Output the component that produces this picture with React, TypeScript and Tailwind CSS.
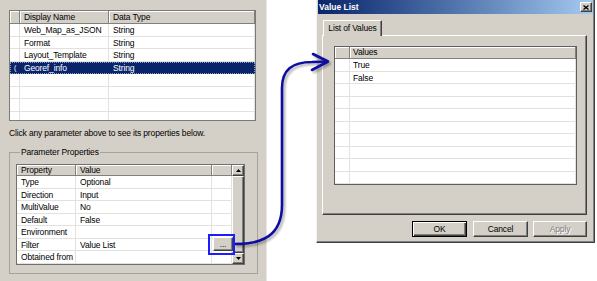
import React from 'react';

const raised =
  'bg-[#d4d0c8] border border-t-white border-l-white border-r-[#404040] border-b-[#404040] shadow-[inset_-1px_-1px_0_#808080]';
const headCell =
  'h-full bg-[#d4d0c8] border-r border-b border-[#808080] shadow-[inset_1px_1px_0_#fff] whitespace-nowrap overflow-hidden';
const line = 'border-r border-b border-[#e2e1de] whitespace-nowrap overflow-hidden';

function TopTable() {
  const rows = [
    ['Web_Map_as_JSON', 'String'],
    ['Format', 'String'],
    ['Layout_Template', 'String'],
    ['Georef_info', 'String'],
    ['', ''],
    ['', ''],
    ['', ''],
    ['', ''],
  ];
  return (
    <div className="w-[247px] h-[111px] shrink-0 border border-[#7a7a7a] bg-white overflow-hidden">
      <div className="flex h-[13px] leading-[12px]">
        <div className={`w-[10px] shrink-0 ${headCell}`} />
        <div className={`w-[89px] shrink-0 pl-[4px] ${headCell}`}>Display Name</div>
        <div className={`flex-1 pl-[4px] ${headCell}`}>Data Type</div>
      </div>
      {rows.map(([name, type], i) =>
        i === 3 ? (
          <div
            key={i}
            className="flex h-[12.5px] leading-[12px] bg-[#0a246a] text-white outline-1 outline-dotted -outline-offset-1 outline-[#8f98bd]"
          >
            <div className="w-[10px] shrink-0 pl-[4px] text-[7px]">(</div>
            <div className="w-[89px] shrink-0 pl-[4px]">{name}</div>
            <div className="flex-1 pl-[4px]">{type}</div>
          </div>
        ) : (
          <div key={i} className="flex h-[12.5px] leading-[12px]">
            <div className={`w-[10px] shrink-0 ${line}`} />
            <div className={`w-[89px] shrink-0 pl-[4px] ${line}`}>{name}</div>
            <div className={`flex-1 pl-[4px] ${line}`}>{type}</div>
          </div>
        )
      )}
    </div>
  );
}

function ScrollBar() {
  return (
    <div className="w-[12px] shrink-0 flex flex-col bg-[#ece9e4]">
      <div className={`h-[11px] shrink-0 flex items-center justify-center ${raised}`}>
        <svg width="5" height="3" viewBox="0 0 5 3">
          <path d="M2.5 0L5 3H0z" fill="#000" />
        </svg>
      </div>
      <div className={`flex-1 ${raised}`} />
      <div className={`h-[11px] shrink-0 flex items-center justify-center ${raised}`}>
        <svg width="5" height="3" viewBox="0 0 5 3">
          <path d="M0 0H5L2.5 3z" fill="#000" />
        </svg>
      </div>
    </div>
  );
}

function PropTable() {
  const rows = [
    ['Type', 'Optional'],
    ['Direction', 'Input'],
    ['MultiValue', 'No'],
    ['Default', 'False'],
    ['Environment', ''],
    ['Filter', 'Value List'],
    ['Obtained from', ''],
  ];
  return (
    <div className="flex w-[229px] border border-[#6f6f6f] bg-white">
      <div className="w-[215px] shrink-0 flex flex-col">
        <div className="flex h-[11px] leading-[10px]">
          <div className={`w-[59px] shrink-0 pl-[4px] ${headCell}`}>Property</div>
          <div className={`w-[136px] shrink-0 pl-[4px] ${headCell}`}>Value</div>
          <div className={`flex-1 ${headCell}`} />
        </div>
        {rows.map(([p, v]) => (
          <div key={p} className="flex h-[12.5px] leading-[12px]">
            <div className={`w-[59px] shrink-0 pl-[4px] ${line}`}>{p}</div>
            <div className={`w-[136px] shrink-0 pl-[4px] ${line}`}>{v}</div>
            <div className="relative flex-1 border-r border-b border-[#e2e1de]">
              {p === 'Filter' && (
                <>
                  <div
                    className={`absolute left-[1px] -top-[1.5px] w-[20px] h-[14px] flex items-center justify-center leading-none text-[#202020] ${raised}`}
                  >
                    ...
                  </div>
                  <div className="absolute z-10 -left-[4px] -top-[4.5px] w-[27px] h-[21px] border-2 border-[#1c1cff]" />
                </>
              )}
            </div>
          </div>
        ))}
      </div>
      <ScrollBar />
    </div>
  );
}

function ValuesTable() {
  const rows = ['True', 'False', '', '', '', '', '', '', '', '', ''];
  return (
    <div className="w-[243px] h-[139px] border border-[#5f5f5f] bg-white overflow-hidden">
      <div className="flex h-[12px] leading-[11px]">
        <div className={`w-[15px] shrink-0 ${headCell}`} />
        <div className={`flex-1 pl-[3px] ${headCell}`}>Values</div>
      </div>
      {rows.map((v, i) => (
        <div key={i} className="flex h-[12.5px] leading-[12px]">
          <div className={`w-[15px] shrink-0 ${line}`} />
          <div className={`flex-1 pl-[3px] ${line}`}>{v}</div>
        </div>
      ))}
    </div>
  );
}

function Dialog() {
  const btn = 'h-[16px] flex items-center justify-center bg-[#d4d0c8]';
  return (
    <div className="ml-[49px] w-[279px] h-[243px] shrink-0 flex flex-col bg-[#d4d0c8] border-l border-r border-b border-l-[#f4f3ef] border-r-[#404040] border-b-[#404040] shadow-[inset_-1px_-1px_0_#808080]">
      <div className="ml-[1px] mr-[1px] h-[14px] shrink-0 flex items-center bg-linear-to-r from-[#0a246a] to-[#a6caf0] pl-[1px] pr-[1px]">
        <span className="flex-1 text-white font-bold text-[8.5px] tracking-normal leading-none">Value List</span>
        <div className={`w-[12px] h-[10px] flex items-center justify-center ${raised}`}>
          <svg width="6" height="5" viewBox="0 0 6 5">
            <path d="M0.5 0.5L5.5 4.5M5.5 0.5L0.5 4.5" stroke="#000" strokeWidth="1.3" />
          </svg>
        </div>
      </div>
      <div className="ml-[5px] mt-[6px] w-[265px]">
        <div className="flex">
          <div className="ml-[1px] w-[59px] h-[16px] -mb-[1px] relative z-10 bg-[#d4d0c8] border-t border-l border-t-white border-l-white border-r border-r-[#404040] shadow-[inset_-1px_0_0_#808080] text-center leading-[14px]">
            List of Values
          </div>
        </div>
        <div className="h-[180px] border border-t-white border-l-white border-r-[#404040] border-b-[#404040] shadow-[inset_-1px_-1px_0_#808080] pt-[10px] pl-[11px]">
          <ValuesTable />
        </div>
        <div className="flex justify-end mt-[6px]">
          <div
            className={`w-[55px] border border-black shadow-[inset_1px_1px_0_#fff,inset_-1px_-1px_0_#404040,inset_-2px_-2px_0_#808080] ${btn}`}
          >
            OK
          </div>
          <div className={`ml-[6px] w-[55px] ${raised} ${btn}`}>Cancel</div>
          <div className={`ml-[5px] w-[54px] text-[#808080] [text-shadow:1px_1px_0_#fff] ${raised} ${btn}`}>
            Apply
          </div>
        </div>
      </div>
    </div>
  );
}

function Arrow() {
  return (
    <svg className="absolute left-0 top-0 pointer-events-none" width="597" height="281">
      <defs>
        <filter id="sh" x="-20%" y="-20%" width="140%" height="140%">
          <feDropShadow dx="2" dy="2" stdDeviation="1.2" floodColor="#000" floodOpacity="0.3" />
        </filter>
      </defs>
      <g
        filter="url(#sh)"
        fill="none"
        stroke="#1010a0"
        strokeWidth="2.6"
        strokeLinecap="round"
        strokeLinejoin="round"
      >
        <path d="M235 244 C262 244 282 236 282 205 L282 88 C282 70 292 62 312 62 L327 61.5" />
        <path d="M313 54 L328 61.5 L312 70" />
      </g>
    </svg>
  );
}

export default function App() {
  return (
    <div className="relative w-[597px] h-[281px] overflow-hidden bg-white flex font-['Liberation_Sans',Arial,sans-serif] text-[8.5px] tracking-[-0.15px] text-black">
      <div className="w-[267px] h-[281px] shrink-0 bg-[#d4d0c8] border-r border-[#e9e7e2] pl-[9px] pt-[10px] flex flex-col">
        <TopTable />
        <div className="mt-[6px] leading-[12px]">Click any parameter above to see its properties below.</div>
        <fieldset className="mt-[7px] w-[249px] h-[128px] border border-[#a6a39c] px-[6px] pb-0">
          <legend className="ml-[4px] px-[1px] leading-[12px]">Parameter Properties</legend>
          <div className="mt-[6px]">
            <PropTable />
          </div>
        </fieldset>
      </div>
      <Dialog />
      <Arrow />
    </div>
  );
}
